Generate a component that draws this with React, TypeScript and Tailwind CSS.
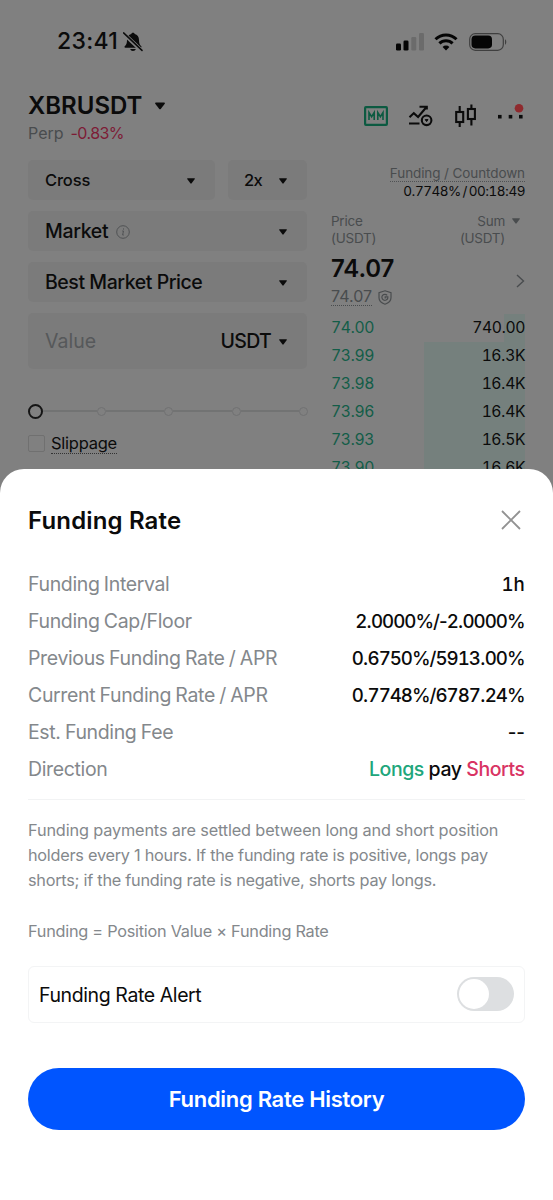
import React from "react";

function Caret({ className = "" }: { className?: string }) {
  return (
    <svg viewBox="0 0 8 6" className={`shrink-0 ${className}`} fill="currentColor">
      <path d="M.7.2h6.600c.5 0 .8.5.5.9L4.600 5.300a.8.8 0 0 1-1.200 0L.2 1.100C-.1.7.2.2.7.2Z" />
    </svg>
  );
}

/* Digits share one advance width while the punctuation keeps its natural one. */
function Num({ children }: { children: string }) {
  return (
    <>
      {children.split(/(\d+)/).map((part, i) => (
        <span key={i} className={i % 2 ? "tabular-nums" : ""}>{part}</span>
      ))}
    </>
  );
}

function StatusBar() {
  return (
    <div className="flex h-[27px] items-center justify-between pr-[46px] pl-[57px]">
      <div className="flex items-center gap-[5px]">
        <span className="text-[23px] leading-[27px] font-medium tracking-[0.3px]">23:41</span>
        <svg width="20" height="20" viewBox="0 0 20 20" fill="currentColor">
          <path d="M10 .8c.9 0 1.500.5 1.700 1.200 2.700.7 4.300 2.900 4.300 5.900 0 3.600.8 5 2.300 6.300.5.5.2 1.500-.6 1.500H2.300c-.8 0-1.100-1-.6-1.500C3.200 12.900 4 11.500 4 7.900 4 4.900 5.600 2.700 8.300 2 8.500 1.300 9.100.8 10 .8ZM7.200 17h5.600c-.3 1.300-1.400 2-2.800 2s-2.500-.7-2.800-2Z" />
          <path d="m0 1 19 18" stroke="#808080" strokeWidth="4" />
          <path d="m.6.9 18.400 17.500" stroke="currentColor" strokeWidth="1.500" strokeLinecap="round" />
        </svg>
      </div>
      <div className="flex items-center">
        <svg width="28" height="18" viewBox="0 0 28 18">
          <rect x="0" y="10.500" width="5" height="7" rx="1.300" fill="#050505" />
          <rect x="7.500" y="7.500" width="5" height="10" rx="1.300" fill="#050505" />
          <rect x="15.300" y="4" width="5" height="13.500" rx="1.300" fill="#6b6b6b" />
          <rect x="23" y="0" width="5" height="17.500" rx="1.300" fill="#6b6b6b" />
        </svg>
        <svg width="24" height="18" viewBox="0 0 24 18" className="ml-[10px]" fill="none" stroke="#050505" strokeWidth="3">
          <path d="M1.500 6.200a15 15 0 0 1 21 0" />
          <path d="M5.400 10.400a9.400 9.400 0 0 1 13.200 0" />
          <path d="M12 17.500 8.600 14a4.800 4.800 0 0 1 6.800 0Z" fill="#050505" stroke="none" />
        </svg>
        <svg width="38" height="18" viewBox="0 0 38 18" className="ml-[11px]">
          <rect x=".7" y=".7" width="33.600" height="16.600" rx="5.500" fill="none" stroke="#3f3f3f" strokeWidth="1.200" />
          <rect x="2.500" y="2.600" width="20.500" height="12.800" rx="3.800" fill="#050505" />
          <path d="M36 6.300c1.700.8 1.700 4.600 0 5.400Z" fill="#3f3f3f" />
        </svg>
      </div>
    </div>
  );
}

function Header() {
  return (
    <div className="flex justify-between pr-[28px] pl-[28px]">
      <div>
        <div className="flex h-[30px] items-center">
          <span className="text-[24px] leading-[30px] font-semibold">XBRUSDT</span>
          <Caret className="ml-[13px] h-[8px] w-[10px]" />
        </div>
        <div className="flex h-[24px] items-center gap-[7px] text-[16px] leading-[24px]">
          <span className="text-[#494c4e]">Perp</span>
          <span className="tracking-[-0.55px] text-[#7d1c36]">-0.83%</span>
        </div>
      </div>
      <div className="flex h-[28px] items-center pt-[21px]">
        <svg width="24" height="20" viewBox="0 0 24 20" fill="none" stroke="#0c5a41">
          <rect x="1.100" y="1.200" width="21.800" height="17.600" rx=".8" strokeWidth="2.200" />
          <path d="M5 14V6.500l2.600 4.200 2.600-4.200V14M13.800 14V6.500l2.600 4.200L19 6.500V14" strokeWidth="1.600" />
        </svg>
        <svg width="25" height="22" viewBox="0 0 25 22" className="ml-[20px]" fill="none" stroke="#0b0b0b" strokeWidth="2.100">
          <path d="m1.500 12.300 4.300-4.200 4.300 3.900 8.200-9.700M11.500 1.800h7.300v2.700M1 18.500h10.500" />
          <circle cx="18.600" cy="15.300" r="4.800" />
          <path d="m17.200 14.600 1.400 2 1.400-2Z" fill="#0b0b0b" strokeWidth="1" />
        </svg>
        <svg width="22" height="24" viewBox="0 0 22 24" className="ml-[22px]" fill="none" stroke="#0b0b0b" strokeWidth="2.100">
          <rect x="1.200" y="8" width="7" height="10" />
          <path d="M4.700 2V8M4.700 18v5" />
          <rect x="12.900" y="5" width="7" height="10" />
          <path d="M16.400.5V5M16.400 15v6.500" />
        </svg>
        <svg width="28" height="24" viewBox="0 0 28 24" className="ml-[20px]" fill="#0b0b0b">
          <rect x="1" y="10.900" width="3.600" height="3.600" />
          <rect x="11.700" y="10.900" width="3.600" height="3.600" />
          <rect x="22" y="10.900" width="3.600" height="3.600" />
          <circle cx="22" cy="4.300" r="4.300" fill="#8f2a2e" />
        </svg>
      </div>
    </div>
  );
}

function Slider() {
  return (
    <div className="mt-[34px] flex h-[16px] items-center">
      <span className="size-[15px] shrink-0 rounded-full border-2 border-[#151515]" />
      {["w-[54px]", "flex-1", "flex-1", "flex-1"].map((width, i) => (
        <React.Fragment key={i}>
          <span className={`h-[2px] bg-[#727373] ${width}`} />
          <span className="size-[9px] shrink-0 rounded-full border-[1.500px] border-[#707172]" />
        </React.Fragment>
      ))}
    </div>
  );
}

function OrderForm() {
  return (
    <div className="w-[280px] shrink-0">
      <div className="flex gap-[13px]">
        <div className="flex h-[40px] w-[187px] items-center justify-between rounded-[5px] bg-[#7b7b7b] pt-px pr-[20px] pl-[17px]">
          <span className="text-[16.500px] font-[450] tracking-[-0.15px]">Cross</span>
          <Caret className="h-[6px] w-[8px]" />
        </div>
        <div className="flex h-[40px] w-[79px] items-center justify-between rounded-[5px] bg-[#7b7b7b] pt-px pr-[20px] pl-[16px]">
          <span className="text-[16.500px] font-[450] tracking-[-0.7px]">2x</span>
          <Caret className="h-[6px] w-[8px]" />
        </div>
      </div>
      <div className="mt-[11px] flex h-[40px] w-[279px] items-center rounded-[5px] bg-[#7b7b7b] pt-px pr-[20px] pl-[17px]">
        <span className="text-[19.500px] font-[450] tracking-[-0.35px]">Market</span>
        <svg width="14" height="14" viewBox="0 0 14 14" className="ml-[8px]" fill="none" stroke="#505254">
          <circle cx="7" cy="7" r="6.300" />
          <path d="M6.200 6h1.300l-.9 4h1.200M7.500 3.400v1.200" />
        </svg>
        <Caret className="ml-auto h-[6px] w-[8px]" />
      </div>
      <div className="mt-[11px] flex h-[40px] w-[279px] items-center justify-between rounded-[5px] bg-[#7b7b7b] pt-px pr-[20px] pl-[17px]">
        <span className="text-[19.500px] font-[450] tracking-[-0.45px]">Best Market Price</span>
        <Caret className="h-[6px] w-[8px]" />
      </div>
      <div className="mt-[11px] flex h-[56px] w-[279px] items-center rounded-[5px] bg-[#7b7b7b] pt-px pr-[20px] pl-[17px]">
        <span className="text-[19.500px] text-[#56585a]">Value</span>
        <span className="ml-auto text-[19.500px] font-[450] tracking-[-0.7px]">USDT</span>
        <Caret className="ml-[8px] h-[6px] w-[8px]" />
      </div>
      <Slider />
      <div className="mt-[13px] flex h-[22px] items-center gap-[6px]">
        <span className="size-[17px] rounded-[2px] border border-[#707070]" />
        <span className="border-b border-dotted border-[#333] text-[16.500px] leading-[20px] tracking-[-0.25px]">Slippage</span>
      </div>
    </div>
  );
}

const book = [
  ["74.00", "740.00", "w-[21px]"],
  ["73.99", "16.3K", "w-[101px]"],
  ["73.98", "16.4K", "w-[101px]"],
  ["73.96", "16.4K", "w-[101px]"],
  ["73.93", "16.5K", "w-[101px]"],
  ["73.90", "16.6K", "w-[101px]"],
];

function OrderBook() {
  return (
    <div className="w-[194px] shrink-0">
      <div className="flex flex-col items-end pt-[5px]">
        <span className="border-b border-dotted border-[#505254] text-[13.500px] leading-[16px] tracking-[-0.1px] text-[#494c4e]">Funding / Countdown</span>
        <span className="mt-px text-[13.500px] leading-[17px] tracking-[-0.5px] [word-spacing:-1.500px]"><Num>0.7748% / 00:18:49</Num></span>
      </div>
      <div className="mt-[13px] flex justify-between text-[13.500px] leading-[17px] tracking-[-0.25px] text-[#494c4e]">
        <div>Price<br />(USDT)</div>
        <div className="flex">
          <div className="text-right">Sum<br />(USDT)</div>
          <Caret className="mt-[5px] mr-[5px] ml-[7px] h-[6px] w-[8px]" />
        </div>
      </div>
      <div className="flex h-[67px] items-center justify-between">
        <div>
          <div className="text-[24px] leading-[28px] font-semibold tracking-[-0.1px]">74.07</div>
          <div className="mt-[5px] flex items-center gap-[6px] text-[#494c4e]">
            <span className="border-b border-dotted border-[#494c4e] text-[16px] leading-[17px]">74.07</span>
            <svg width="14" height="15" viewBox="0 0 14 15" fill="none" stroke="currentColor" strokeWidth="1.200">
              <path d="M7 .8 13 2.700v5c0 3.300-2.700 5.300-6 6.500C3.700 13 1 11 1 7.700v-5Z" />
              <path d="M9.200 5.400A3 3 0 1 0 9.800 8V6.800H7.200v1.700" />
            </svg>
          </div>
        </div>
        <svg width="9" height="14" viewBox="0 0 9 14" className="mt-px" fill="none" stroke="#494c4e" strokeWidth="1.400">
          <path d="m1 1 6.500 6L1 13" />
        </svg>
      </div>
      <div>
        {book.map(([price, sum, bar]) => (
          <div key={price} className="relative flex h-[28.100px] items-center justify-between pb-px text-[15.700px]">
            <span className={`absolute top-0 right-0 h-full bg-[#75807d] ${bar}`} />
            <span className="relative tracking-[-0.45px] text-[#135d48]"><Num>{price}</Num></span>
            <span className="relative tracking-[-0.45px]"><Num>{sum}</Num></span>
          </div>
        ))}
      </div>
    </div>
  );
}

function Row({ label, children }: { label: string; children: React.ReactNode }) {
  return (
    <div className="flex h-[37.100px] items-center justify-between text-[19.500px]">
      <span className="tracking-[-0.36px] text-[#84888c] [word-spacing:-0.8px]">{label}</span>
      <span className="pr-[0.5px] text-[18.700px] font-[450] tracking-[-0.99px]">{children}</span>
    </div>
  );
}

function FundingSheet() {
  return (
    <section className="h-[731px] rounded-t-[24px] bg-white px-[28px] pt-[35px]">
      <div className="flex h-[34px] items-center justify-between">
        <h2 className="text-[24px] font-semibold tracking-[0.15px]">Funding Rate</h2>
        <svg width="20" height="20" viewBox="0 0 20 20" className="mt-[-2px] mr-[4px]" fill="none" stroke="#929292" strokeWidth="1.800">
          <path d="m1 1 18 18M19 1 1 19" />
        </svg>
      </div>
      <div className="mt-[28px]">
        <Row label="Funding Interval"><span className="tracking-[-0.2px]"><Num>1h</Num></span></Row>
        <Row label="Funding Cap/Floor"><Num>2.0000%/-2.0000%</Num></Row>
        <Row label="Previous Funding Rate / APR"><Num>0.6750%/5913.00%</Num></Row>
        <Row label="Current Funding Rate / APR"><Num>0.7748%/6787.24%</Num></Row>
        <Row label="Est. Funding Fee"><span className="tracking-[-0.3px]">--</span></Row>
        <Row label="Direction">
          <span className="text-[19.500px] tracking-[-0.45px]"><span className="text-[#20a67b]">Longs</span> pay <span className="text-[#d93363]">Shorts</span></span>
        </Row>
      </div>
      <div className="mt-[10px] h-px bg-[#f2f3f4]" />
      <div className="mt-[18px] text-[16.300px] leading-[25.300px] tracking-[-0.26px] text-[#84888c]">
        <p><span className="tracking-[-0.15px]">Funding payments are settled between long and short position</span><br />holders every 1 hours. If the funding rate is positive, longs pay<br />shorts; if the funding rate is negative, shorts pay longs.</p>
        <p className="mt-[26px]">Funding = Position Value × Funding Rate</p>
      </div>
      <div className="mt-[21px] flex h-[57px] items-center justify-between rounded-[6px] border border-[#f3f4f5] pr-[10px] pl-[10px]">
        <span className="mt-[2px] text-[19.500px] tracking-[-0.4px]">Funding Rate Alert</span>
        <span className="flex h-[34px] w-[57px] items-center rounded-full bg-[#dddfe1] p-[2px]">
          <span className="size-[30px] rounded-full bg-white" />
        </span>
      </div>
      <button className="mt-[45px] flex h-[62px] w-full items-center justify-center rounded-full bg-[#0055ff] pt-px text-[22px] font-semibold tracking-[-0.3px] text-white">
        Funding Rate History
      </button>
    </section>
  );
}

export default function App() {
  return (
    <main className="h-[1200px] w-[553px] overflow-hidden bg-[#808080] font-['Inter','Liberation_Sans',sans-serif] text-[#0b0b0b]">
      <div className="h-[469px] overflow-hidden pt-[28px]">
        <StatusBar />
        <div className="h-[36px]" />
        <Header />
        <div className="mt-[15px] flex justify-between pr-[28px] pl-[28px]">
          <OrderForm />
          <OrderBook />
        </div>
      </div>
      <FundingSheet />
    </main>
  );
}
